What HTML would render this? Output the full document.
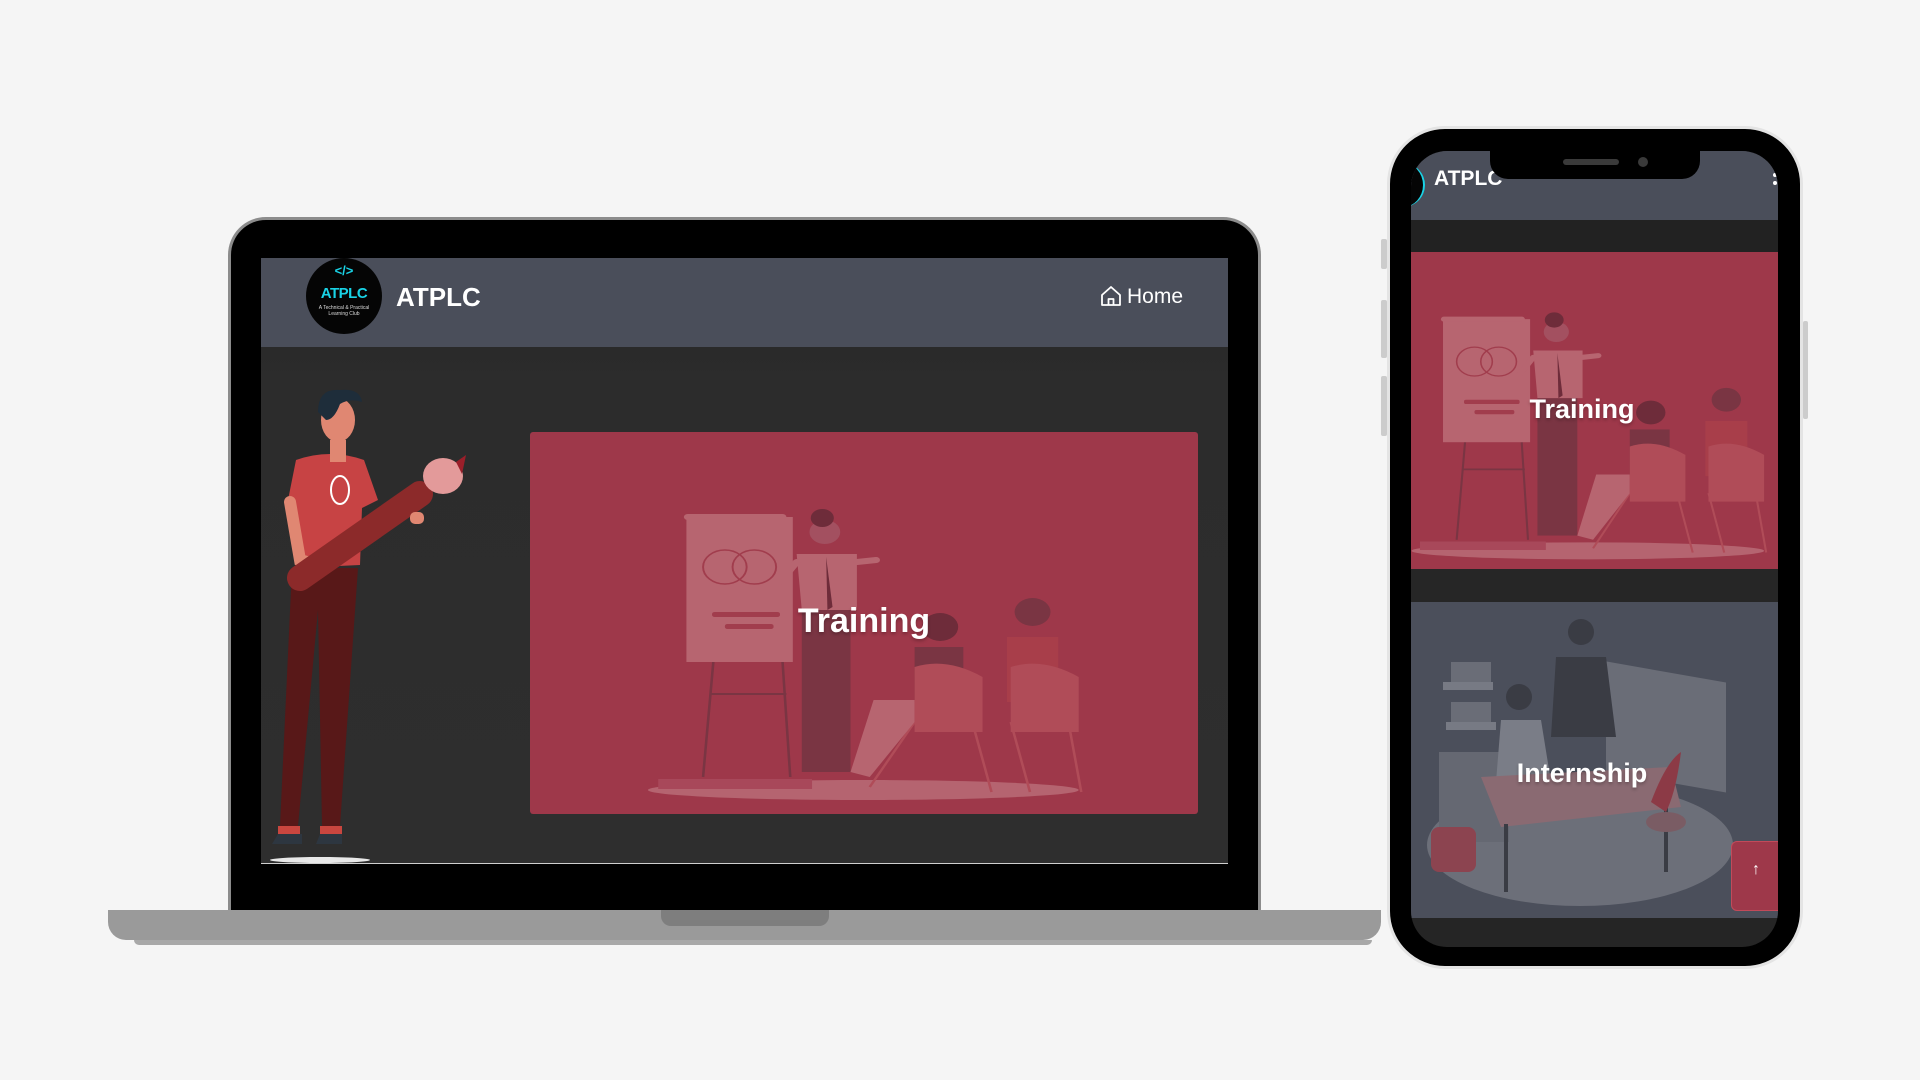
<!DOCTYPE html>
<html><head><meta charset="utf-8">
<style>
*{margin:0;padding:0;box-sizing:border-box}
body{width:1920px;height:1080px;background:#f5f5f5;position:relative;overflow:hidden;font-family:"Liberation Sans",sans-serif}
.abs{position:absolute}
.txt{color:#fff;font-weight:bold;text-shadow:0 2px 3px rgba(0,0,0,.25)}
</style></head><body>

<!-- LAPTOP -->
<div class="abs" style="left:228px;top:217px;width:1033px;height:700px;background:#000;border:3px solid #8c8c8c;border-bottom:none;border-radius:38px 38px 0 0"></div>
<div class="abs" style="left:261px;top:258px;width:967px;height:606px;background:linear-gradient(#222 0,#2c2c2c 120px,#2e2e2e);overflow:hidden;border-bottom:1px solid #cfcfcf">
  <div class="abs" style="left:0;top:0;width:967px;height:89px;background:#4a4e5a"></div>
  <div class="abs" style="left:45px;top:0;width:76px;height:76px;border-radius:50%;background:#050505;top:0px"></div>
  <div class="abs" style="left:45px;top:5px;width:76px;text-align:center;color:#19d3e6;font-weight:bold;font-size:13px">&lt;/&gt;</div>
  <div class="abs" style="left:45px;top:27px;width:76px;text-align:center;color:#19d3e6;font-size:15px;font-weight:bold;letter-spacing:-0.5px">ATPLC</div>
  <div class="abs" style="left:45px;top:47px;width:76px;text-align:center;color:#ddd;font-size:5px;line-height:6px">A Technical &amp; Practical<br>Learning Club</div>
  <div class="abs txt" style="left:135px;top:24px;font-size:26px;text-shadow:none">ATPLC</div>
  <svg class="abs" style="left:838px;top:26px" width="24" height="24" viewBox="0 0 24 24" fill="none" stroke="#fff" stroke-width="1.8" stroke-linejoin="round"><path d="M3 11 L12 3 L21 11 V21 H3 Z"/><path d="M9.5 21 V15 H14.5 V21"/></svg>
  <div class="abs" style="left:866px;top:27px;font-size:21px;color:#fff">Home</div>

  <!-- figure -->
  <svg class="abs" style="left:0;top:0" width="260" height="606" viewBox="261 258 260 606">
    <ellipse cx="320" cy="860" rx="50" ry="3" fill="#e8e8e8"/>
    <path d="M292 568 L280 826 L298 826 L318 610 L322 826 L340 826 L358 568 Z" fill="#581818"/>
    <rect x="278" y="826" width="22" height="8" fill="#c9463f"/><rect x="320" y="826" width="22" height="8" fill="#c9463f"/>
    <path d="M278 834 h24 v10 h-30 z M320 834 h22 v10 h-26 z" fill="#2d3640"/>
    <path d="M296 460 Q330 448 364 460 L378 500 L362 508 L360 565 L296 568 L294 505 L288 500 Z" fill="#c74344"/>
    <ellipse cx="340" cy="490" rx="9" ry="14" fill="none" stroke="#fff" stroke-width="2"/>
    <path d="M290 502 L300 560 L318 565" stroke="#e08772" stroke-width="12" fill="none" stroke-linecap="round"/>
    <rect x="330" y="440" width="16" height="22" fill="#e08772"/>
    <ellipse cx="338" cy="420" rx="17" ry="22" fill="#e08772"/>
    <path d="M318 412 Q318 388 340 390 Q360 388 362 402 Q350 398 340 404 Q334 420 326 420 Z" fill="#1e2d3a"/>
    <path d="M300 578 L420 494" stroke="#8c2a2a" stroke-width="26" stroke-linecap="round"/>
    <ellipse cx="443" cy="476" rx="20" ry="18" fill="#e39a9a"/>
    <path d="M456 462 L466 455 L462 474 Z" fill="#9b1f2a"/>
    <rect x="410" y="512" width="14" height="12" rx="5" fill="#e08772"/>
  </svg>

  <!-- training card -->
  <div class="abs" style="left:269px;top:174px;width:668px;height:382px;background:#9e384a;border-radius:3px;overflow:hidden">
    <svg class="abs" style="left:0;top:0" width="670" height="390" viewBox="0 0 670 390">
      <g transform="scale(1.282,1)">
      <g id="train">
      <ellipse cx="260" cy="358" rx="168" ry="10" fill="#b56470"/>
      <rect x="100" y="347" width="120" height="10" fill="#a8485a"/>
      <path d="M143 230 L135 345 M197 230 L203 345 M140 262 L200 262" stroke="#7a3543" stroke-width="2"/>
      <rect x="122" y="85" width="83" height="145" fill="#b76570"/>
      <rect x="120" y="82" width="80" height="6" rx="3" fill="#b76570"/>
      <circle cx="152" cy="135" r="17" fill="none" stroke="#a13d4d" stroke-width="1.5"/>
      <circle cx="175" cy="135" r="17" fill="none" stroke="#a13d4d" stroke-width="1.5"/>
      <rect x="142" y="180" width="53" height="5" rx="2" fill="#a13d4d"/><rect x="152" y="192" width="38" height="5" rx="2" fill="#a13d4d"/>
      <rect x="212" y="178" width="38" height="162" fill="#7a3543"/>
      <path d="M208 122 L255 122 L255 178 L212 178 Z" fill="#b76570"/>
      <path d="M231 125 L236 175 L232 178 Z" fill="#6e2c3a"/>
      <path d="M208 130 L195 150 M255 130 L270 128" stroke="#b76570" stroke-width="6" stroke-linecap="round"/>
      <circle cx="230" cy="100" r="12" fill="#a35060"/>
      <circle cx="228" cy="86" r="9" fill="#6e2c3a"/>
      <path d="M300 290 L265 355 M345 290 L360 360 M375 290 L390 360 M420 290 L430 360" stroke="#b04c58" stroke-width="2"/>
      <rect x="300" y="215" width="38" height="55" fill="#7a3543"/>
      <circle cx="320" cy="195" r="14" fill="#6e2c3a"/>
      <rect x="372" y="205" width="40" height="65" fill="#a83e4a"/>
      <circle cx="392" cy="180" r="14" fill="#7a3543"/>
      <path d="M268 268 L300 268 L300 290 L265 345 L250 340 Z" fill="#b76570"/>
      <path d="M300 235 Q325 225 353 245 L353 300 L300 300 Z" fill="#b04c58"/>
      <path d="M375 235 Q400 225 428 245 L428 300 L375 300 Z" fill="#b04c58"/>
      </g>
      </g>
    </svg>
    <div class="abs txt" style="top:170px;text-align:center;font-size:34px;left:-6px;width:680px">Training</div>
  </div>
</div>
<!-- laptop base -->
<div class="abs" style="left:108px;top:910px;width:1273px;height:30px;background:#9a9a9a;border-radius:0 0 18px 18px"></div>
<div class="abs" style="left:134px;top:940px;width:1238px;height:5px;background:#a8a8a8;border-radius:0 0 6px 6px"></div>
<div class="abs" style="left:661px;top:910px;width:168px;height:16px;background:#7e7e7e;border-radius:0 0 10px 10px"></div>

<!-- PHONE -->
<div class="abs" style="left:1381px;top:239px;width:6px;height:30px;background:#ccc;border-radius:2px"></div>
<div class="abs" style="left:1381px;top:300px;width:6px;height:58px;background:#ccc;border-radius:2px"></div>
<div class="abs" style="left:1381px;top:376px;width:6px;height:60px;background:#ccc;border-radius:2px"></div>
<div class="abs" style="left:1803px;top:321px;width:5px;height:98px;background:#ccc;border-radius:2px"></div>
<div class="abs" style="left:1387px;top:126px;width:416px;height:843px;background:#000;border:3px solid #e4e4e4;border-radius:58px"></div>
<div class="abs" style="left:1411px;top:151px;width:367px;height:796px;background:#252525;border-radius:36px;overflow:hidden">
  <div class="abs" style="left:0;top:0;width:367px;height:69px;background:#4a4e5a"></div>
  <div class="abs" style="left:-30px;top:12px;width:44px;height:44px;border-radius:50%;background:#050505;border-right:2px solid #19d3e6"></div>
  <div class="abs txt" style="left:23px;top:16px;font-size:21px;text-shadow:none">ATPLC</div>
  <div class="abs" style="left:362px;top:22px;width:4px;height:4px;background:#fff;border-radius:50%;box-shadow:0 8px 0 #fff"></div>
  <div class="abs" style="left:0;top:69px;width:367px;height:32px;background:#222"></div>
  <div class="abs" style="left:0;top:101px;width:367px;height:317px;background:#9e384a;overflow:hidden">
    <svg class="abs" style="left:-96px;top:-5px" width="703" height="331" viewBox="0 0 670 390" preserveAspectRatio="none"><use href="#train"/></svg>
    <div class="abs txt" style="top:142px;text-align:center;font-size:27px;left:-10px;width:362px">Training</div>
  </div>
  <div class="abs" style="left:0;top:418px;width:367px;height:33px;background:#262626"></div>
  <div class="abs" style="left:0;top:451px;width:367px;height:316px;background:#4b4f5b;overflow:hidden">
    <svg class="abs" style="left:0;top:0" width="367" height="316">
      <ellipse cx="169" cy="243" rx="153" ry="61" fill="#6c6f79"/>
      <rect x="32" y="80" width="50" height="8" fill="#777a84"/><rect x="35" y="120" width="50" height="8" fill="#777a84"/>
      <rect x="40" y="60" width="40" height="20" fill="#6a6d77"/><rect x="40" y="100" width="40" height="20" fill="#6a6d77"/>
      <rect x="195" y="25" width="120" height="110" fill="#6a6d77" transform="skewY(10)"/>
      <rect x="28" y="150" width="70" height="90" fill="#656872"/>
      <circle cx="170" cy="30" r="13" fill="#3a3c44"/>
      <path d="M145 55 L195 55 L205 135 L140 135 Z" fill="#3a3c44"/>
      <circle cx="108" cy="95" r="13" fill="#3a3c44"/>
      <path d="M90 118 L130 118 L140 180 L85 180 Z" fill="#7a7d87"/>
      <path d="M70 175 L260 165 L270 205 L90 225 Z" fill="#8a6a72"/>
      <path d="M95 222 L95 290 M255 200 L255 270" stroke="#3a3c44" stroke-width="4"/>
      <rect x="20" y="225" width="45" height="45" rx="8" fill="#8c4450"/>
      <path d="M240 200 Q255 160 270 150 Q265 190 255 210 Z" fill="#8c3a46"/>
      <ellipse cx="255" cy="220" rx="20" ry="10" fill="#7a5c64"/>
    </svg>
    <div class="abs txt" style="left:-10px;width:362px;top:156px;text-align:center;font-size:27px">Internship</div>
    <div class="abs" style="left:320px;top:239px;width:50px;height:70px;background:#9e384a;border:1px solid #c24a5a;border-radius:6px 0 0 6px;color:#fff;font-size:16px;text-align:center;line-height:56px;font-weight:bold">&#8593;</div>
  </div>
  <div class="abs" style="left:79px;top:0;width:210px;height:28px;background:#000;border-radius:0 0 18px 18px"></div>
  <div class="abs" style="left:152px;top:8px;width:56px;height:6px;background:#3a3a3a;border-radius:3px"></div>
  <div class="abs" style="left:227px;top:6px;width:10px;height:10px;background:#3a3a3a;border-radius:50%"></div>
</div>
</body></html>
